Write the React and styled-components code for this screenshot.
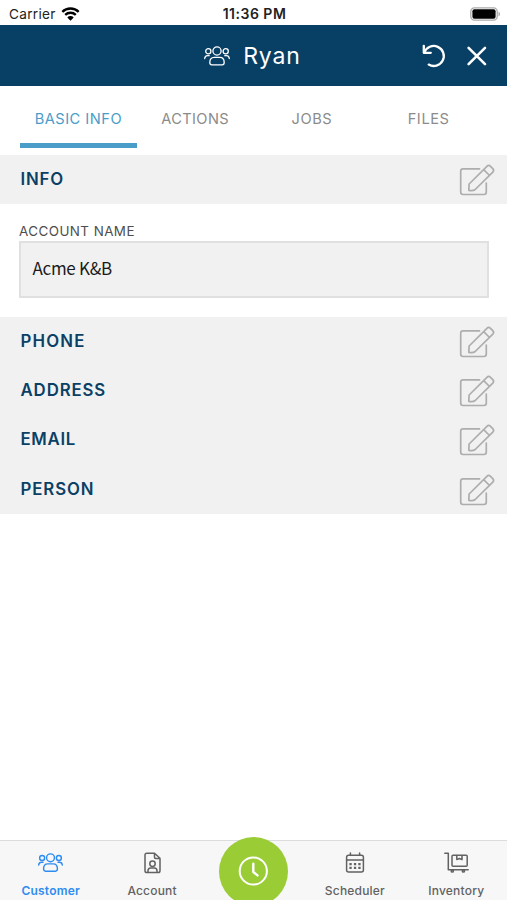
import React from "react";
import styled, { createGlobalStyle } from "styled-components";

const GlobalStyle = createGlobalStyle`
  * {
    box-sizing: border-box;
  }
  body {
    margin: 0;
    background: #ffffff;
    font-family: Inter, sans-serif;
  }
`;

const Screen = styled.div`
  display: flex;
  flex-direction: column;
  height: 100vh;
  overflow: hidden;
  background: #fff;
`;
const StatusBar = styled.div`
  display: grid;
  grid-template-columns: 1fr auto 1fr;
  align-items: center;
  height: 25px;
  padding: 2px 7px 0 9px;
  font-size: 13.6px;
  color: #222;
`;
const Carrier = styled.div`
  display: flex;
  align-items: center;
  gap: 5px;
  letter-spacing: 0.3px;
`;
const Time = styled.div`
  font-weight: 600;
  font-size: 14px;
  letter-spacing: 0.5px;
`;
const BatterySlot = styled.div`
  display: flex;
  justify-content: flex-end;
`;
const Header = styled.header`
  display: grid;
  grid-template-columns: 1fr auto 1fr;
  align-items: center;
  height: 61px;
  padding: 0 20px 0 18px;
  background: #083f65;
  color: #fff;
`;
const Title = styled.div`
  grid-column: 2;
  display: flex;
  align-items: center;
  gap: 13px;
  font-size: 23px;
  letter-spacing: 0.9px;
`;
const HeaderActions = styled.div`
  display: flex;
  justify-content: flex-end;
  align-items: center;
  gap: 21px;
`;
const Tabs = styled.nav`
  display: flex;
  height: 69px;
  padding: 0 20px 7px;
`;
const Tab = styled.div`
  flex: 1;
  display: flex;
  justify-content: center;
  padding-top: 24px;
  border-bottom: 5px solid ${(p) => (p.$active ? "#499dc8" : "transparent")};
  color: ${(p) => (p.$active ? "#499dc8" : "#8b8b8b")};
  font-size: 14.6px;
  line-height: 19px;
  letter-spacing: ${(p) => p.$spacing}px;
`;
const SectionRow = styled.div`
  display: flex;
  align-items: center;
  justify-content: space-between;
  height: 49.25px;
  padding: 0 12px 0 20.5px;
  background: #f1f1f1;
`;
const SectionName = styled.div`
  padding-bottom: 2px;
  color: #0b4065;
  font-size: 16.8px;
  font-weight: 600;
  letter-spacing: ${(p) => p.$spacing}px;
`;
const Field = styled.div`
  padding: 18px 18px 19px 19px;
`;
const Label = styled.div`
  height: 19px;
  line-height: 18px;
  font-size: 13.4px;
  color: #4e4e4e;
  letter-spacing: 0.45px;
`;
const Value = styled.div`
  height: 57px;
  padding: 0 11.5px;
  border: 2px solid #e0e0e0;
  background: #f1f1f1;
  color: #1b1b1b;
  font-family: "Noto Sans CJK SC", sans-serif;
  font-size: 17px;
  letter-spacing: -0.3px;
  line-height: 49px;
`;
const TabBar = styled.footer`
  display: grid;
  grid-template-columns: repeat(5, 1fr);
  height: 60px;
  margin-top: auto;
  border-top: 1px solid #dcdcdc;
  background: #f7f7f7;
`;
const BarItem = styled.div`
  display: flex;
  flex-direction: column;
  align-items: center;
  padding-top: 11px;
  gap: 9px;
  color: ${(p) => (p.$active ? "#2f8cf0" : "#626262")};
  font-size: 12px;
  line-height: 16px;
  font-weight: ${(p) => (p.$active ? 600 : 500)};
  letter-spacing: 0.2px;
`;
const BarIcon = styled.div`
  display: flex;
  align-items: center;
  height: 22px;
`;
const ClockButton = styled.div`
  display: flex;
  align-items: center;
  justify-content: center;
  justify-self: center;
  width: 69px;
  height: 69px;
  margin-top: -4px;
  border-radius: 50%;
  background: #9acc35;
  color: #fff;
`;

const Line = styled.svg`
  display: block;
  flex: none;
  overflow: visible;
  fill: none;
  stroke: currentColor;
  stroke-width: ${(p) => p.$weight || 1.5};
  stroke-linecap: round;
  stroke-linejoin: round;
`;
const EditSvg = styled(Line)`
  color: #adadad;
`;

function WifiIcon() {
  return (
    <svg width="19" height="14" viewBox="0 0 18 14" fill="none" stroke="#000" strokeWidth="2.3">
      <path d="M.8 4.8a11.8 11.8 0 0 1 16.4 0M3.7 7.9a7.6 7.6 0 0 1 10.6 0" />
      <path d="M9 13.7 5.8 10.4a4.6 4.6 0 0 1 6.4 0Z" fill="#000" stroke="none" />
    </svg>
  );
}

function BatteryIcon() {
  return (
    <svg width="30" height="14" viewBox="0 0 30 14">
      <rect x=".8" y=".8" width="26.4" height="12.4" rx="3.6" fill="#fff" stroke="#aaa" strokeWidth="1.3" />
      <rect x="2.4" y="2.3" width="23.2" height="9.4" rx="2" fill="#000" />
      <path d="M28.5 4.7c2 .7 2 3.9 0 4.6Z" fill="#aaa" />
    </svg>
  );
}

function PeopleIcon({ weight, size = 26 }) {
  return (
    <Line width={size} height={(size * 20) / 26} viewBox="0 0 26 20" $weight={weight}>
      <circle cx="13" cy="5" r="4.1" />
      <circle cx="4.3" cy="5.2" r="2.6" />
      <circle cx="21.7" cy="5.2" r="2.6" />
      <path d="M5.8 16.5c0-3.4 1.7-5.2 4.3-5.2h5.8c2.6 0 4.3 1.8 4.3 5.2 0 1.6-.6 2.4-2 2.4H7.8c-1.4 0-2-.8-2-2.4Z" />
      <path d="M.7 12.5c.2-1.9 1.3-2.8 3-2.8h1.5M25.3 12.5c-.2-1.9-1.3-2.8-3-2.8h-1.5" />
    </Line>
  );
}

function UndoIcon() {
  return (
    <Line width="24" height="24" viewBox="0 0 24 24" $weight={2.3}>
      <path d="M1.8 1.8v7h7" />
      <path d="M2.4 8.5A10 10 0 1 1 6.7 20.6" />
    </Line>
  );
}

function CloseIcon() {
  return (
    <Line width="20" height="20" viewBox="0 0 20 20" $weight={2.6}>
      <path d="m1.6 1.8 16.4 16.4M18 1.8 1.6 18.2" />
    </Line>
  );
}

function EditIcon() {
  return (
    <EditSvg width="36" height="32" viewBox="0 0 36 32" $weight={1.7}>
      <path d="M20.5 4.9H4.1c-1.6 0-2.4.7-2.4 2.3v20.9c0 1.6.8 2.4 2.4 2.4h20.8c1.6 0 2.4-.8 2.4-2.4v-9" />
      <path d="m9.8 26.4.3-6.4L27.9 2.3c1.2-1.2 2.4-1.2 3.6 0l2.3 2.3c1.1 1.2 1.1 2.3 0 3.5L16.2 25.5c-1.3 1-3.5 1.3-6.4.9ZM24.7 5.7l5.8 5.8" />
    </EditSvg>
  );
}

function AccountIcon() {
  return (
    <Line width="17" height="22" viewBox="0 0 17 22">
      <path d="M10.5 1.3H2.7c-1.1 0-1.7.6-1.7 1.7v15.7c0 1.2.6 1.8 1.7 1.8h11.6c1.1 0 1.7-.6 1.7-1.8V6.3L10.5 1.3v4c0 .7.4 1.1 1.1 1.1H16" />
      <circle cx="8.5" cy="11.8" r="2.7" />
      <path d="M4 20.2v-1.4c0-1.8 1-2.9 2.6-2.9h3.8c1.6 0 2.6 1.1 2.6 2.9v1.4" />
    </Line>
  );
}

function ClockIcon() {
  return (
    <Line width="30" height="30" viewBox="0 0 30 30" $weight={2}>
      <circle cx="15.3" cy="14" r="13.6" />
      <path d="M15.3 6.6V15l4.2 3.4" strokeWidth="2.4" />
    </Line>
  );
}

function CalendarIcon() {
  return (
    <Line width="20" height="22" viewBox="0 0 20 22">
      <rect x="1.6" y="3.2" width="16.8" height="16.8" rx="2" />
      <path d="M1.6 8h16.8M5.4 3V1M14.6 3V1" />
      <path
        d="M5.5 12.1h.1M10 12.1h.1M14.4 12.1h.1M5.5 15.8h.1M10 15.8h.1M14.4 15.8h.1"
        strokeWidth="2.2"
        strokeLinecap="square"
      />
    </Line>
  );
}

function CartIcon() {
  return (
    <Line width="25" height="22" viewBox="0 0 25 22">
      <path d="M.8 1.2h3.5v16.5h19.9" />
      <rect x="8" y="3.2" width="15.2" height="11" rx="1" />
      <path d="M12.8 3.4v4.2l2.6-1.1L18 7.6V3.4" />
      <circle cx="8.3" cy="19" r="1.1" />
      <circle cx="19.4" cy="19" r="1.1" />
    </Line>
  );
}

function Section({ name, spacing }) {
  return (
    <SectionRow>
      <SectionName $spacing={spacing}>{name}</SectionName>
      <EditIcon />
    </SectionRow>
  );
}

function NavItem({ icon, label, active }) {
  return (
    <BarItem $active={active}>
      <BarIcon>{icon}</BarIcon>
      {label}
    </BarItem>
  );
}

export default function App() {
  return (
    <Screen>
      <GlobalStyle />
      <StatusBar>
        <Carrier>
          Carrier <WifiIcon />
        </Carrier>
        <Time>11:36 PM</Time>
        <BatterySlot>
          <BatteryIcon />
        </BatterySlot>
      </StatusBar>
      <Header>
        <Title>
          <PeopleIcon weight={1.3} />
          Ryan
        </Title>
        <HeaderActions>
          <UndoIcon />
          <CloseIcon />
        </HeaderActions>
      </Header>
      <Tabs>
        <Tab $active $spacing={0.5}>BASIC INFO</Tab>
        <Tab $spacing={0.4}>ACTIONS</Tab>
        <Tab $spacing={0.6}>JOBS</Tab>
        <Tab $spacing={0.6}>FILES</Tab>
      </Tabs>
      <Section name="INFO" spacing={0.8} />
      <Field>
        <Label>ACCOUNT NAME</Label>
        <Value>Acme K&amp;B</Value>
      </Field>
      <Section name="PHONE" spacing={1.2} />
      <Section name="ADDRESS" spacing={0.9} />
      <Section name="EMAIL" spacing={0.7} />
      <Section name="PERSON" spacing={0.9} />
      <TabBar>
        <NavItem active icon={<PeopleIcon weight={1.5} size={25} />} label="Customer" />
        <NavItem icon={<AccountIcon />} label="Account" />
        <ClockButton>
          <ClockIcon />
        </ClockButton>
        <NavItem icon={<CalendarIcon />} label="Scheduler" />
        <NavItem icon={<CartIcon />} label="Inventory" />
      </TabBar>
    </Screen>
  );
}
